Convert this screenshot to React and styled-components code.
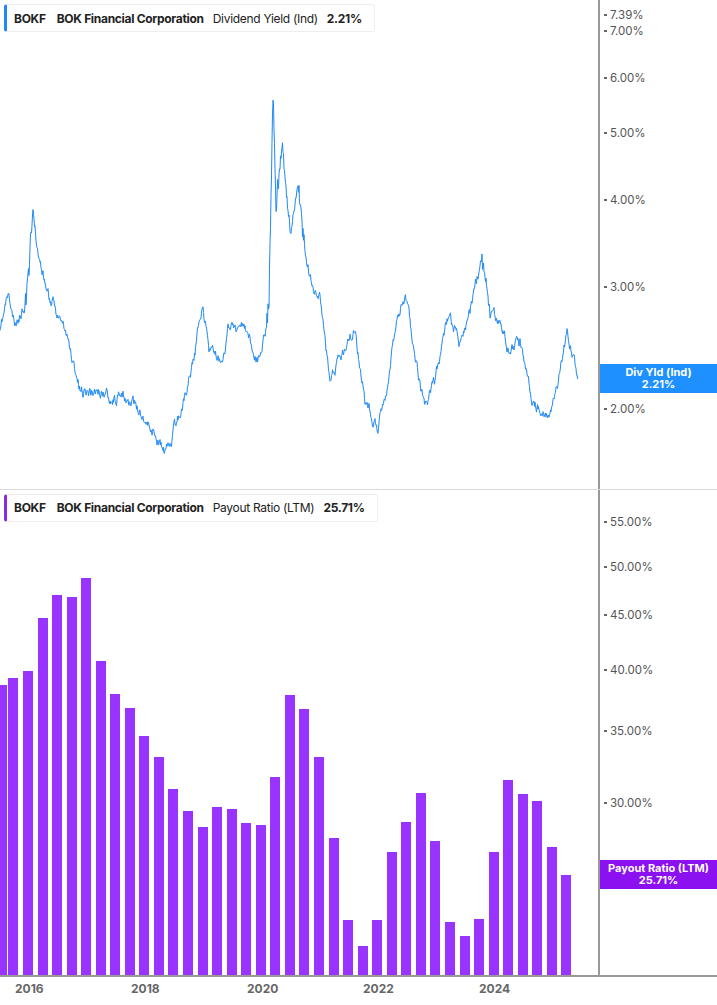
import React from 'react';
import styled, { createGlobalStyle } from 'styled-components';

const GlobalStyle = createGlobalStyle`
  html, body { margin: 0; background: #fff; }
  body { font-family: Inter, "Liberation Sans", sans-serif; }
`;

const linePts = [
  [0,335],[8,295],[15,330],[25,300],[33,215],[40,260],[50,300],[65,330],[80,390],[95,390],[110,395],
  [125,400],[140,410],[155,435],[165,455],[175,430],[185,395],[195,350],[202,305],[210,350],[220,360],
  [230,325],[245,330],[258,360],[266,330],[269,300],[273,90],[276,200],[282,140],[290,230],[298,190],
  [305,250],[312,290],[320,300],[330,380],[345,350],[355,330],[365,400],[378,425],[385,395],[395,330],
  [405,295],[415,360],[425,410],[435,380],[448,320],[460,340],[470,315],[482,255],[490,320],[500,320],
  [510,350],[520,340],[530,395],[540,410],[548,420],[557,385],[567,333],[572,355],[578,378],
];

function buildLine() {
  let seed = 11;
  const rnd = () => { seed = (seed * 16807) % 2147483647; return seed / 2147483647 - 0.5; };
  const out = [];
  let walk = 0;
  for (let i = 0; i < linePts.length - 1; i++) {
    const [x0, y0] = linePts[i];
    const [x1, y1] = linePts[i + 1];
    const steps = Math.max(1, Math.round((x1 - x0) / 0.5));
    const big = Math.abs(y1 - y0) / (x1 - x0) > 8;
    for (let s = 0; s < steps; s++) {
      const t = s / steps;
      walk = walk * 0.8 + rnd() * (big ? 8 : 9);
      const y = y0 + (y1 - y0) * t + walk + (big ? rnd() * 18 : 0);
      out.push(`${(x0 + (x1 - x0) * t).toFixed(1)},${y.toFixed(1)}`);
    }
  }
  out.push('578,378');
  return out.join(' ');
}

const bars = [
  [-3,684],[8,677],[23,670],[38,617],[52,594],[67,596],[81,577],[96,660],[110,693],[125,707],[139,735],
  [154,756],[168,788],[183,810],[198,826],[212,806],[227,808],[241,822],[256,824],[270,776],[285,694],
  [299,708],[314,756],[329,837],[343,919],[358,945],[372,919],[387,851],[401,821],[416,792],[430,840],
  [445,921],[460,935],[474,918],[489,851],[503,779],[518,793],[532,800],[547,846],[561,874],
];

const topTicks = [['7.39%',15],['7.00%',31],['6.00%',78],['5.00%',133],['4.00%',200],['3.00%',287],['2.00%',409]];
const botTicks = [['55.00%',32],['50.00%',77],['45.00%',125],['40.00%',180],['35.00%',241],['30.00%',313],['25.00%',395]];
const years = [['2016',30],['2018',146],['2020',262],['2022',378],['2024',494]];

export default function App() {
  return (
    <>
      <GlobalStyle />
      <Page>
        <Pane $h={489}>
          <Plot>
            <Legend $accent="#1e88f5">
              <b>BOKF</b><b>BOK Financial Corporation</b><span>Dividend Yield (Ind)</span><b>2.21%</b>
            </Legend>
            <svg width="598" height="488" style={{ display: 'block' }}>
              <polyline points={buildLine()} fill="none" stroke="#1e88f5" strokeWidth="1" strokeLinejoin="round" />
            </svg>
          </Plot>
          <Axis>
            {topTicks.map(([t, y]) => <Tick key={t} style={{ top: y - 7 }}>{t}</Tick>)}
            <PriceTag $bg="#1e90ff" style={{ top: 364 }}>Div Yld (Ind)<br />2.21%</PriceTag>
          </Axis>
        </Pane>
        <Pane $h={486}>
          <Plot>
            <Legend $accent="#8a2be2">
              <b>BOKF</b><b>BOK Financial Corporation</b><span>Payout Ratio (LTM)</span><b>25.71%</b>
            </Legend>
            <svg width="598" height="485" style={{ display: 'block' }}>
              {bars.map(([x, y], i) => (
                <rect key={i} x={x} y={y - 489} width="10" height={974 - y} fill="#9933ff" />
              ))}
            </svg>
          </Plot>
          <Axis>
            {botTicks.map(([t, y]) => <Tick key={t} style={{ top: y - 7 }}>{t}</Tick>)}
            <PriceTag $bg="#8b11f0" style={{ top: 370 }}>Payout Ratio (LTM)<br />25.71%</PriceTag>
          </Axis>
        </Pane>
        <Years>
          {years.map(([y, x]) => <Year key={y} style={{ left: x - 15 }}>{y}</Year>)}
        </Years>
      </Page>
    </>
  );
}

const Page = styled.div`
  width: 717px;
  height: 1005px;
  display: flex;
  flex-direction: column;
  overflow: hidden;
`;

const Pane = styled.div`
  display: flex;
  height: ${p => p.$h}px;
  border-bottom: 1px solid #d9d9d9;
  &:nth-child(2) { border-bottom: 2px solid #999; }
`;

const Plot = styled.div`
  position: relative;
  width: 598px;
  border-right: 2px solid #999;
`;

const Legend = styled.div`
  position: absolute;
  left: 4px;
  top: 4px;
  height: 26px;
  display: flex;
  align-items: center;
  gap: 9px;
  padding: 0 12px 0 7px;
  background: rgba(255,255,255,0.9);
  border: 1px solid #eee;
  border-left: 3px solid ${p => p.$accent};
  border-radius: 3px;
  font-size: 12px;
  letter-spacing: -0.3px;
  color: #222;
  b { font-weight: 700; }
  b:first-child { margin-right: 2px; }
`;

const Axis = styled.div`
  position: relative;
  flex: 1;
`;

const Tick = styled.div`
  position: absolute;
  left: 4px;
  font-size: 11.5px;
  color: #555;
  padding-left: 6px;
  &::before {
    content: '';
    position: absolute;
    left: 0;
    top: 6px;
    width: 3px;
    height: 2px;
    background: #666;
  }
`;

const PriceTag = styled.div`
  position: absolute;
  left: 0;
  right: 0;
  height: 29px;
  padding-top: 2px;
  box-sizing: border-box;
  background: ${p => p.$bg};
  color: #fff;
  font-size: 11px;
  font-weight: 700;
  line-height: 12px;
  text-align: center;
  z-index: 1;
`;

const Years = styled.div`
  position: relative;
  height: 28px;
`;

const Year = styled.div`
  position: absolute;
  top: 4px;
  font-size: 12px;
  font-weight: 700;
  color: #666;
`;
